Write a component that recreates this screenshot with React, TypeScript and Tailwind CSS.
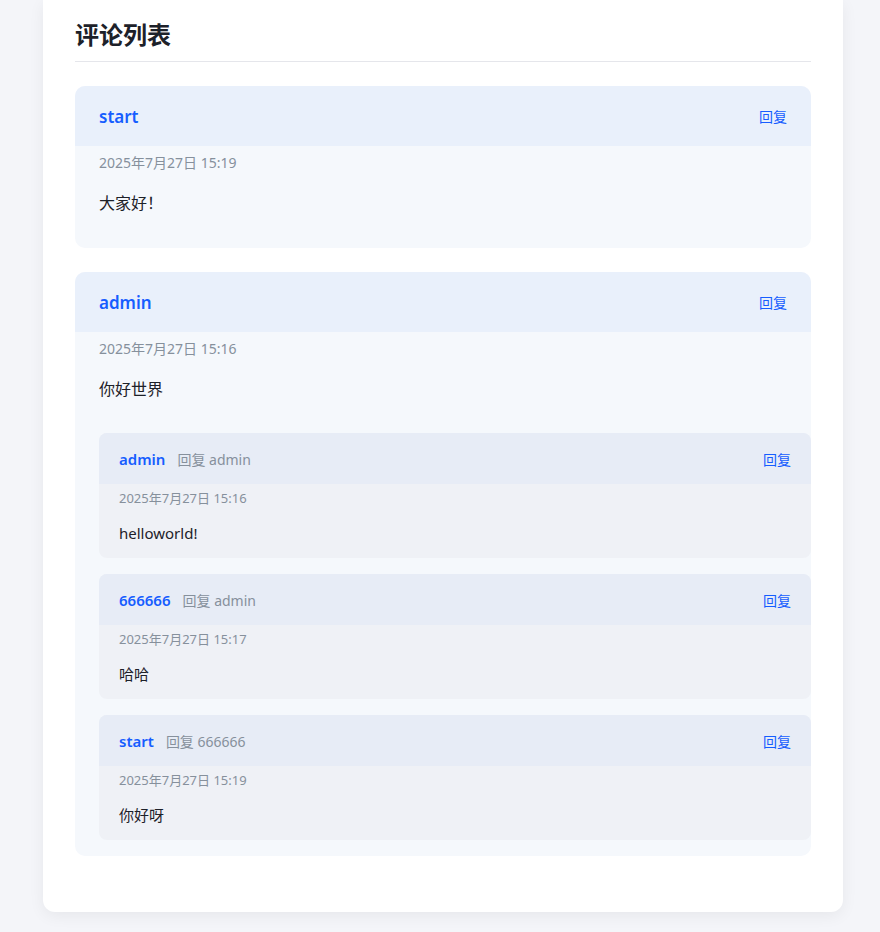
type Reply = { id: number; author: string; to: string; time: string; content: string };
type Comment = { id: number; author: string; time: string; content: string; replies: Reply[] };

const comments: Comment[] = [
  { id: 1, author: 'start', time: '2025年7月27日 15:19', content: '大家好！', replies: [] },
  {
    id: 2,
    author: 'admin',
    time: '2025年7月27日 15:16',
    content: '你好世界',
    replies: [
      { id: 3, author: 'admin', to: 'admin', time: '2025年7月27日 15:16', content: 'helloworld!' },
      { id: 4, author: '666666', to: 'admin', time: '2025年7月27日 15:17', content: '哈哈' },
      { id: 5, author: 'start', to: '666666', time: '2025年7月27日 15:19', content: '你好呀' },
    ],
  },
];

function ReplyItem({ reply }: { reply: Reply }) {
  return (
    <div className="overflow-hidden rounded-lg bg-[#eff1f6]">
      <div className="flex h-[51px] items-center justify-between bg-[#e7ecf6] px-5 pt-[2px]">
        <div className="flex items-center">
          <span className="text-[15px] font-semibold text-[#165dff]">{reply.author}</span>
          <span className="ml-3 text-[14px] text-[#86909c]">回复 {reply.to}</span>
        </div>
        <button className="text-[14px] text-[#165dff]">回复</button>
      </div>
      <div className="px-5 pb-[14px] pt-[5px]">
        <div className="text-[13px] leading-[18px] text-[#86909c]">{reply.time}</div>
        <div className="mt-[15px] text-[15px] leading-[22px] text-[#1d2129]">{reply.content}</div>
      </div>
    </div>
  );
}

function CommentItem({ comment }: { comment: Comment }) {
  return (
    <div className="overflow-hidden rounded-[10px] bg-[#f5f8fc]">
      <div className="flex h-[60px] items-center justify-between bg-[#e9f0fb] px-6 pt-[1px]">
        <span className="text-[17px] font-semibold text-[#165dff]">{comment.author}</span>
        <button className="text-[14px] text-[#165dff]">回复</button>
      </div>
      <div className="pt-[7px]">
        <div className="px-6 text-[14px] leading-5 text-[#86909c]">{comment.time}</div>
        <div className="mt-[18px] px-6 text-[16px] leading-6 text-[#1d2129]">{comment.content}</div>
        {comment.replies.length > 0 ? (
          <div className="ml-6 mt-[32px] flex flex-col gap-4 pb-4">
            {comment.replies.map((r) => (
              <ReplyItem key={r.id} reply={r} />
            ))}
          </div>
        ) : (
          <div className="h-[33px]" />
        )}
      </div>
    </div>
  );
}

export default function App() {
  return (
    <div
      className="min-h-screen bg-[#f4f5f9] pb-[21px]"
      style={{ fontFamily: '"Noto Sans", "Noto Sans CJK SC", sans-serif' }}
    >
      <div className="ml-[43px] w-[800px] rounded-b-xl bg-white px-8 pb-[56px] pt-[19px] shadow-[0_4px_16px_rgba(0,0,0,0.06)]">
        <h1 className="border-b border-[#e5e6eb] pb-[10px] text-2xl leading-8 font-bold text-[#1d2129]">评论列表</h1>
        <div className="mt-6 flex flex-col gap-6">
          {comments.map((c) => (
            <CommentItem key={c.id} comment={c} />
          ))}
        </div>
      </div>
    </div>
  );
}
